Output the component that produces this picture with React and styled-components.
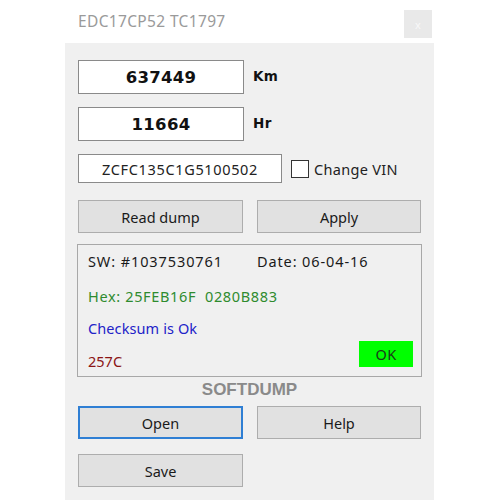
import React from "react";
import styled, { createGlobalStyle } from "styled-components";

const Global = createGlobalStyle`
  html, body { margin: 0; padding: 0; background: #ffffff; }
  body { font-family: "Noto Sans", "Open Sans", sans-serif; }
`;

const Window = styled.div`
  margin-left: 65px;
  width: 369px;
  height: 500px;
  display: flex;
  flex-direction: column;
`;

const TitleBar = styled.div`
  height: 43px;
  background: #ffffff;
  display: flex;
  align-items: flex-start;
  justify-content: space-between;
  padding-left: 13px;
  padding-right: 2px;
  box-sizing: border-box;
`;

const Title = styled.div`
  margin-top: 10px;
  font-size: 15.5px;
  color: #9a9a9a;
  letter-spacing: 0.35px;
`;

const CloseBox = styled.div`
  margin-top: 10px;
  width: 28px;
  height: 28px;
  background: #e9e9e9;
  color: #f8f8f8;
  font-size: 11px;
  display: flex;
  align-items: center;
  justify-content: center;
`;

const Body = styled.div`
  flex: 1;
  background: #f0f0f0;
  padding: 17px 13px 0 13px;
  display: flex;
  flex-direction: column;
`;

const Row = styled.div`
  display: flex;
  align-items: center;
  gap: ${(p) => p.$gap || 9}px;
  margin-top: ${(p) => p.$top || 0}px;
`;

const NumberBox = styled.div`
  width: 166px;
  height: 34px;
  box-sizing: border-box;
  background: #ffffff;
  border: 1px solid #8a8a8a;
  display: flex;
  align-items: center;
  justify-content: center;
  font-family: "DejaVu Sans", Verdana, sans-serif;
  font-weight: bold;
  font-size: 16.5px;
  letter-spacing: 0.3px;
  color: #111;
`;

const Unit = styled.span`
  font-family: "DejaVu Sans", Verdana, sans-serif;
  font-weight: bold;
  font-size: 13.5px;
  letter-spacing: 0.4px;
  color: #111;
  margin-top: -3px;
`;

const VinBox = styled.div`
  width: 204px;
  height: 29px;
  box-sizing: border-box;
  background: #ffffff;
  border: 1px solid #8a8a8a;
  display: flex;
  align-items: center;
  justify-content: center;
  font-size: 14.5px;
  letter-spacing: 0.65px;
  color: #222;
`;

const CheckLabel = styled.label`
  display: flex;
  align-items: center;
  gap: 5px;
  font-size: 14.5px;
  letter-spacing: 0.3px;
  color: #222;
`;

const CheckSquare = styled.span`
  width: 18px;
  height: 18px;
  box-sizing: border-box;
  border: 1px solid #333;
  background: #fff;
`;

const ButtonRow = styled.div`
  display: flex;
  gap: 14px;
  margin-top: ${(p) => p.$top || 0}px;
`;

const Button = styled.div`
  width: ${(p) => p.$w || 165}px;
  height: 33px;
  box-sizing: border-box;
  background: #e1e1e1;
  border: ${(p) => (p.$focused ? "2px solid #2f7fd4" : "1px solid #adadad")};
  display: flex;
  align-items: center;
  justify-content: center;
  font-size: 14.5px;
  color: #1a1a1a;
`;

const InfoBox = styled.div`
  margin-top: 11px;
  margin-left: -1px;
  width: 345px;
  height: 133px;
  box-sizing: border-box;
  border: 1px solid #a8a8a8;
  padding: 6px 8px 0 10px;
  display: flex;
  flex-direction: column;
  font-size: 14.5px;
  line-height: 20px;
`;

const InfoLine = styled.div`
  display: flex;
  gap: ${(p) => p.$gap || 0}px;
  margin-top: ${(p) => p.$top || 0}px;
  color: ${(p) => p.$color || "#1a1a1a"};
  letter-spacing: ${(p) => p.$spacing || 0}px;
  align-items: flex-start;
  justify-content: ${(p) => (p.$spread ? "space-between" : "flex-start")};
`;

const Code = styled.span`
  margin-top: 10px;
`;

const OkBadge = styled.div`
  width: 54px;
  height: 26px;
  background: #00ff00;
  color: #1a3a1a;
  display: flex;
  align-items: center;
  justify-content: center;
  font-size: 14.5px;
  letter-spacing: 0.3px;
`;

const Brand = styled.div`
  text-align: center;
  font-family: "Liberation Sans", Arial, sans-serif;
  font-weight: bold;
  font-size: 17px;
  color: #8a8a8a;
  margin-top: 2px;
  height: 27px;
  line-height: 22px;
`;

export default function App() {
  return (
    <>
      <Global />
      <Window>
        <TitleBar>
          <Title>EDC17CP52 TC1797</Title>
          <CloseBox>x</CloseBox>
        </TitleBar>
        <Body>
          <Row>
            <NumberBox>637449</NumberBox>
            <Unit>Km</Unit>
          </Row>
          <Row $top={13}>
            <NumberBox>11664</NumberBox>
            <Unit>Hr</Unit>
          </Row>
          <Row $top={13}>
            <VinBox>ZCFC135C1G5100502</VinBox>
            <CheckLabel>
              <CheckSquare />
              Change VIN
            </CheckLabel>
          </Row>
          <ButtonRow $top={17}>
            <Button $w={165}>Read dump</Button>
            <Button $w={164}>Apply</Button>
          </ButtonRow>
          <InfoBox>
            <InfoLine $gap={34} $spacing={0.9}>
              <span>SW: #1037530761</span>
              <span>Date: 06-04-16</span>
            </InfoLine>
            <InfoLine $top={15} $color="#2e8b2e" $spacing={0.65}>
              Hex: 25FEB16F&nbsp;&nbsp;0280B883
            </InfoLine>
            <InfoLine $top={12} $color="#2222c8" $spacing={0.1}>
              Checksum is Ok
            </InfoLine>
            <InfoLine $top={3} $color="#8b1414" $spread>
              <Code>257C</Code>
              <OkBadge>OK</OkBadge>
            </InfoLine>
          </InfoBox>
          <Brand>SOFTDUMP</Brand>
          <ButtonRow>
            <Button $w={165} $focused>Open</Button>
            <Button $w={164}>Help</Button>
          </ButtonRow>
          <ButtonRow $top={15}>
            <Button $w={165}>Save</Button>
          </ButtonRow>
        </Body>
      </Window>
    </>
  );
}
